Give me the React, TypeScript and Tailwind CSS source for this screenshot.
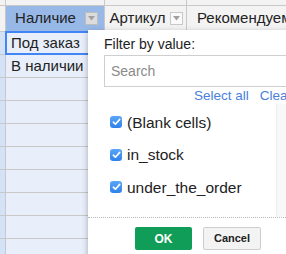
import React from "react";

const FilterBtn = ({ active }: { active?: boolean }) => (
  <div
    className={`w-[13px] h-[13px] border flex items-center justify-center ${
      active ? "bg-[#dcdcdc] border-[#bdbdbd]" : "bg-[#fafafa] border-[#c8c8c8]"
    }`}
  >
    <svg width="7" height="5" viewBox="0 0 7 5">
      <path d="M0 0 L7 0 L3.5 4.5 Z" fill="#a0a0a0" />
    </svg>
  </div>
);

const Check = () => (
  <div className="w-[12px] h-[12px] rounded-[3px] bg-gradient-to-b from-[#5aa6f8] to-[#2f80ea] flex items-center justify-center">
    <svg width="9" height="8" viewBox="0 0 9 8">
      <path
        d="M1.3 4.2 L3.4 6.2 L7.7 1.4"
        fill="none"
        stroke="#fff"
        strokeWidth="1.6"
        strokeLinecap="round"
        strokeLinejoin="round"
      />
    </svg>
  </div>
);

const rows = ["Под заказ", "В наличии", "", "", "", "", "", "", "", ""];
const values = ["(Blank cells)", "in_stock", "under_the_order"];

export default function App() {
  return (
    <div className="relative w-[286px] h-[254px] overflow-hidden bg-white font-['Liberation_Sans',Arial,sans-serif] text-[#222]">
      {/* column letters strip */}
      <div className="flex h-[6px] bg-[#f3f3f3] border-b border-[#c8c8c8]">
        <div className="w-[6px] border-r border-[#c8c8c8]" />
        <div className="w-[99px] border-r border-[#c8c8c8]" />
        <div className="w-[82px] border-r border-[#c8c8c8]" />
        <div className="flex-1" />
      </div>

      {/* header row */}
      <div className="flex h-[26px] border-b border-[#c8c8c8] text-[15px]">
        <div className="w-[6px] bg-[#f3f3f3] border-r border-[#c8c8c8]" />
        <div className="w-[99px] bg-[#98b9e8] border-r border-[#c8c8c8] flex items-center pr-[6px]">
          <span className="flex-1 text-center whitespace-nowrap">Наличие</span>
          <FilterBtn active />
        </div>
        <div className="w-[82px] bg-[#f3f3f3] border-r border-[#c8c8c8] flex items-center pr-[3px]">
          <span className="flex-1 text-center whitespace-nowrap">Артикул</span>
          <FilterBtn />
        </div>
        <div className="flex-1 bg-[#f3f3f3] flex items-center pl-[10px] whitespace-nowrap overflow-hidden">
          Рекомендуемая
        </div>
      </div>

      {/* data rows */}
      {rows.map((r, i) => (
        <div key={i} className="flex h-[23px] border-b border-[#c8c8c8] text-[15px]">
          <div className="w-[6px] bg-[#d3e2f7] border-r border-[#c8c8c8]" />
          <div className="relative w-[99px] bg-[#e8effb] border-r border-[#c8c8c8] flex items-center pl-[5px] whitespace-nowrap">
            {r}
            {i === 0 && (
              <div className="absolute left-[-1px] top-[-1px] right-[-1px] bottom-[-1px] border-2 border-[#4285f4]" />
            )}
          </div>
          <div className="w-[82px] border-r border-[#e2e2e2]" />
          <div className="flex-1" />
        </div>
      ))}

      {/* filter popup */}
      <div className="absolute left-[88px] top-[30px] w-[220px] h-[240px] bg-white shadow-[0_2px_6px_rgba(0,0,0,0.3)]">
        <div className="px-4 pt-[6px]">
          <div className="text-[14px] leading-4 whitespace-nowrap">Filter by value:</div>
          <div className="mt-[3px] h-[32px] border border-[#cfcfcf] flex items-center pl-[6px] text-[14px] text-[#8a8a8a]">
            Search
          </div>
          <div className="mt-[1px] h-4 flex justify-end gap-[11px] text-[13.5px] leading-4 text-[#4a7fdc] whitespace-nowrap">
            <span>Select all</span>
            <span>Clear</span>
          </div>
        </div>

        <div className="mx-4 h-[113px] flex">
          <div className="flex-1 pl-[6px] pt-[2px]">
            {values.map((v) => (
              <div key={v} className="h-[32.5px] flex items-center gap-[5px] text-[15.5px] whitespace-nowrap">
                <Check />
                <span>{v}</span>
              </div>
            ))}
          </div>
          <div className="w-[16px] bg-[#f8f8f8] border-l border-[#ececec]" />
        </div>

        <div className="border-t border-dotted border-[#b8b8b8] pt-[9px] flex justify-center gap-[11px]">
          <div className="w-[57px] h-[23px] rounded-[2px] bg-[#0f9d58] text-white text-[12px] font-bold flex items-center justify-center">
            OK
          </div>
          <div className="w-[58px] h-[23px] rounded-[2px] bg-[#f3f3f3] border border-[#cdcdcd] text-[11px] font-bold flex items-center justify-center">
            Cancel
          </div>
        </div>
      </div>
    </div>
  );
}
